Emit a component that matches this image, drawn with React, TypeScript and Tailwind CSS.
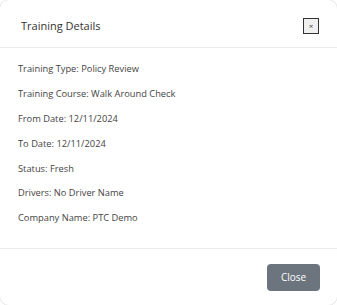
import React from 'react'

const rows: [string, string][] = [
  ['Training Type', 'Policy Review'],
  ['Training Course', 'Walk Around Check'],
  ['From Date', '12/11/2024'],
  ['To Date', '12/11/2024'],
  ['Status', 'Fresh'],
  ['Drivers', 'No Driver Name'],
  ['Company Name', 'PTC Demo'],
]

export default function App() {
  return (
    <div
      className="w-[337px] h-[305px] overflow-hidden bg-white"
      style={{ fontFamily: '"Open Sans", "Liberation Sans", sans-serif' }}
    >
      <div className="-m-px h-[307px] w-[339px] rounded-[10px] border border-black/10 flex flex-col">
        <div className="h-[48px] pt-[5px] flex items-center justify-between pl-[21px] pr-[18px] border-b border-[#e9ecef]">
          <h5 className="text-[11px] text-[#333]">Training Details</h5>
          <button className="w-[16px] h-[16px] border border-[#333] bg-[#efefef] flex items-center justify-center text-[8px] leading-none text-[#444]">
            ×
          </button>
        </div>
        <div className="flex-1 pl-[18px] pt-[9px] flex flex-col">
          {rows.map(([k, v]) => (
            <p key={k} className="h-[24.8px] shrink-0 flex items-center text-[9.3px] text-[#444]">
              {k}: {v}
            </p>
          ))}
        </div>
        <div className="h-[57px] border-t border-[#e9ecef] flex items-center justify-end pr-[17px]">
          <button className="w-[53px] h-[27px] rounded-[4px] bg-[#6c757d] text-white text-[10px]">
            Close
          </button>
        </div>
      </div>
    </div>
  )
}
